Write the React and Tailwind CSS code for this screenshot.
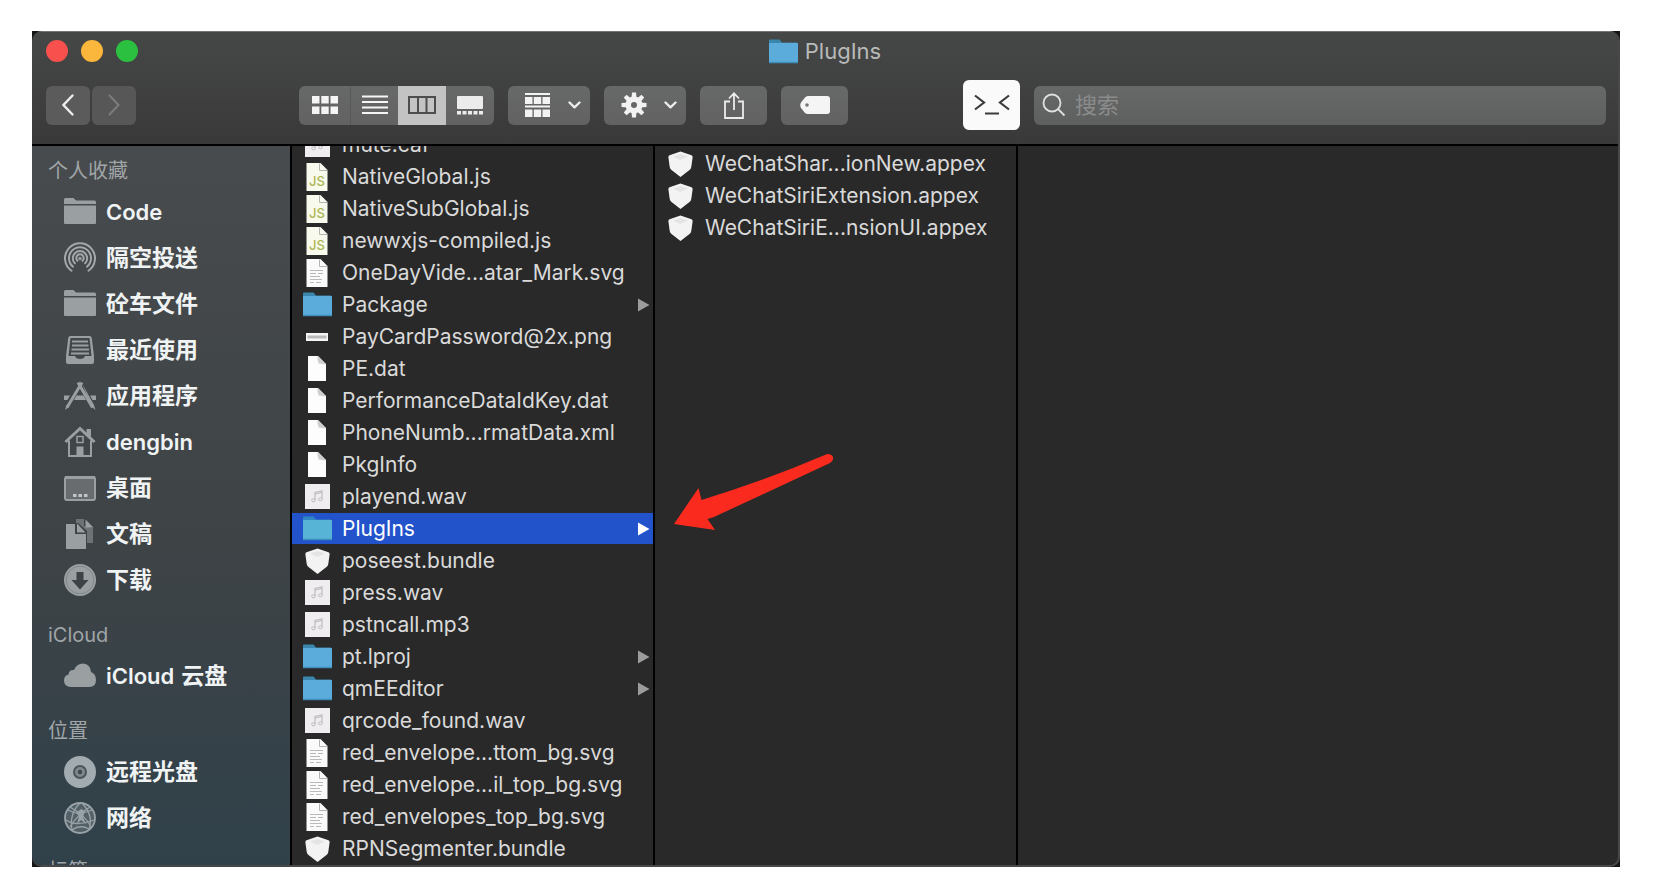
import React from "react";

const FONT = "font-['Inter','Noto_Sans_CJK_SC',sans-serif]";

/* ---------- file icons ---------- */

function BlueFolder({ selected }) {
  const front = selected ? "#58b4d6" : "#5cacdb";
  return (
    <svg viewBox="0 0 29 25" className="h-[25px] w-[29px]" aria-hidden="true">
      <path d="M0 1.5Q0 .5 1 .5H10.500L13 3.500H28V8H0Z" fill={selected ? "#3187c4" : "#3b86ad"} />
      <rect x="0" y="4" width="29" height="20" rx="0.500" fill={front} />
      <path d="M0 23.500H29" stroke="#3f8fbd" strokeWidth="1.500" />
    </svg>
  );
}

function Page({ fill = "#fafafa", children }) {
  return (
    <svg viewBox="0 0 22 28" className="h-7 w-[22px]" aria-hidden="true">
      <path d="M.5 0H14.500L21.500 7V28H.5Z" fill={fill} />
      <path d="M13.500 .5V7.500H21" fill="none" stroke="#b5b5b5" strokeWidth="1" />
      {children}
    </svg>
  );
}

function JsIcon() {
  return (
    <Page fill="#f9faee">
      <text x="11" y="23" textAnchor="middle" fontFamily="Inter" fontSize="13" fontWeight="500" fill="#adb552">
        JS
      </text>
    </Page>
  );
}

function SvgIcon() {
  return (
    <Page>
      <path d="M4 11.500H17M4 14.500H10M12 14.500H17M4 17.500H14M4 20.500H16M4 23.500H8M10 23.500H15" stroke="#b9b9b9" strokeWidth="1" />
    </Page>
  );
}

function BlankIcon() {
  return (
    <svg viewBox="0 0 18 25" className="h-[25px] w-[18px]" aria-hidden="true">
      <path d="M0 0H10L18 8V25H0Z" fill="#fdfdfd" />
      <path d="M9 0.500L10.500 7.500L18 8.500L10 0Z" fill="#cfcfcf" />
    </svg>
  );
}

function AudioIcon() {
  return (
    <svg viewBox="0 0 25 25" className="size-[25px]" aria-hidden="true">
      <rect width="25" height="25" fill="#efedef" />
      <path d="M10 16V8.500L17 7V15M10 10L17 8.500" fill="none" stroke="#bdbbbf" strokeWidth="1.200" />
      <ellipse cx="8.500" cy="16.300" rx="1.800" ry="1.500" fill="none" stroke="#bdbbbf" />
      <ellipse cx="15.500" cy="15.300" rx="1.800" ry="1.500" fill="none" stroke="#bdbbbf" />
    </svg>
  );
}

function PngIcon() {
  return (
    <svg viewBox="0 0 22 8" className="h-2 w-[22px]" aria-hidden="true">
      <rect width="22" height="8" fill="#f4f4f4" />
      <rect x="1.500" y="2.500" width="19" height="3" fill="#b9b9b9" />
    </svg>
  );
}

function BundleIcon() {
  return (
    <svg viewBox="0 0 25 26" className="h-[26px] w-[25px]" aria-hidden="true">
      <path d="M12.500 .5L23.500 4.200Q24.800 4.800 24.600 6.500L23.300 16Q23 18 21.500 19L12.500 26L3.500 19Q2 18 1.700 16L.4 6.500Q.2 4.800 1.500 4.200Z" fill="#f3f3f3" />
      <path d="M5 5.500L12.500 3L20 5.500L12.500 9Z" fill="#e4e4e4" />
    </svg>
  );
}

const FILE_ICONS = {
  folder: BlueFolder,
  js: JsIcon,
  svg: SvgIcon,
  blank: BlankIcon,
  audio: AudioIcon,
  png: PngIcon,
  bundle: BundleIcon,
};

/* ---------- sidebar icons ---------- */

function SideSvg({ children }) {
  return (
    <svg viewBox="0 0 32 32" className="size-8 shrink-0" fill="#9a9fa2" stroke="none" aria-hidden="true">
      {children}
    </svg>
  );
}

const SIDE_ICONS = {
  folder: (
    <SideSvg>
      <path d="M0 3.500Q0 2 1.500 2H9.500L12 4.500H30.500Q32 4.500 32 6V8H0Z" />
      <path d="M0 9.500H32V27Q32 28 31 28H1Q0 28 0 27Z" />
    </SideSvg>
  ),
  airdrop: (
    <SideSvg>
      <g fill="none" stroke="#a3a7aa" strokeWidth="2" strokeLinecap="round">
        <path d="M7.500 28.700A15 15 0 1 1 24.500 28.700" />
        <path d="M9 24.700A11 11 0 1 1 23 24.700" />
        <path d="M10.800 21.300A7.200 7.200 0 1 1 21.200 21.300" />
        <path d="M13.500 18.800A3.700 3.700 0 1 1 18.500 18.800" />
      </g>
      <circle cx="16" cy="16.500" r="1.700" />
    </SideSvg>
  ),
  recents: (
    <SideSvg>
      <path fillRule="evenodd" d="M6.500 2H25.500Q27.500 2 27.800 4L30 22V28Q30 30 28 30H4Q2 30 2 28V22L4.200 4Q4.500 2 6.500 2ZM6.500 4L4.500 22H11Q12 25 16 25T21 22H27.500L25.500 4Z" />
      <path d="M8 7.500H24M8 11.500H24.500M7.500 15.500H25M7 19.500H25" stroke="#9a9fa2" strokeWidth="1.800" />
    </SideSvg>
  ),
  apps: (
    <SideSvg>
      <path d="M14 2.500L28.500 27.500M18 2.500L3 27.500" stroke="#9a9fa2" strokeWidth="3" />
      <path d="M18 3.500L30 25L31.500 30L28 27" />
      <path d="M0 15.500H6L3.500 20H0ZM12.500 15.500H19.500L22 20H10ZM26 15.500H32V20H28.500Z" />
      <path d="M1 30L5 27L2.500 25Z" />
    </SideSvg>
  ),
  home: (
    <SideSvg>
      <path d="M1.500 16L16 2.500L30.500 16" fill="none" stroke="#9a9fa2" strokeWidth="3" />
      <path d="M22.500 3H27V13L22.500 8.500Z" />
      <path d="M5 14.500V30H27V14.500" fill="none" stroke="#9a9fa2" strokeWidth="2" />
      <rect x="13" y="10.500" width="6" height="6" fill="none" stroke="#9a9fa2" strokeWidth="1.500" />
      <rect x="12.500" y="20.500" width="7" height="10" />
    </SideSvg>
  ),
  desktop: (
    <SideSvg>
      <rect x="1" y="5" width="30" height="23" rx="2" fill="#686c6f" stroke="#9a9fa2" strokeWidth="2" />
      <path d="M1 5.500H31" stroke="#9a9fa2" strokeWidth="3" />
      <path d="M9 22H12.500V25H9ZM14.500 22H18V25H14.500ZM20 22H23.500V25H20Z" fill="#c0c4c6" />
    </SideSvg>
  ),
  documents: (
    <SideSvg>
      <path d="M12 1H20V8L29 10V25H23V13L14 5H12Z" fill="#6d7275" />
      <path d="M21.500 1.500V9.500H29.500Z" />
      <path d="M2 6H11V16H22V31H2Z" />
      <path d="M13 5.500V14.500H21.500Z" />
    </SideSvg>
  ),
  downloads: (
    <SideSvg>
      <circle cx="16" cy="16" r="16" />
      <circle cx="16" cy="16" r="13.800" fill="none" stroke="#82878a" strokeWidth="1" />
      <path d="M12.500 8H19.500V16H24.500L16 25.500L7.500 16H12.500Z" fill="#3d4347" />
    </SideSvg>
  ),
  cloud: (
    <SideSvg>
      <path d="M7 27Q0 27 0 20.500Q0 15.500 4.500 14.500Q5 9.500 10 10Q12.500 3.500 19 3.500Q26.500 4 27 12Q32 14 32 20Q32 27 25.500 27Z" />
    </SideSvg>
  ),
  disc: (
    <SideSvg>
      <circle cx="16" cy="16" r="16" fill="#a2abaf" />
      <circle cx="16" cy="16" r="6" fill="#7d878c" stroke="#4b565b" strokeWidth="2" />
      <circle cx="16" cy="16" r="2.200" fill="#3c484e" />
    </SideSvg>
  ),
  network: (
    <SideSvg>
      <circle cx="16" cy="16" r="15" fill="#536067" stroke="#98a2a7" strokeWidth="1.800" />
      <g fill="none" stroke="#98a2a7" strokeWidth="1.300">
        <path d="M4 8Q14 14 28 8M2 18Q12 25 30 18M8 28Q16 22 25 27M16 1Q5 12 8 28M18 1Q30 14 25 27M6 5Q22 14 27 25M26 5Q14 12 6 25" />
      </g>
      <path d="M17 7L21 9L19 15L22 22L17 18L13 22L15 14L12 11Z" fill="#98a2a7" />
    </SideSvg>
  ),
};

/* ---------- data ---------- */

const SECTIONS = [
  {
    title: "个人收藏",
    spacing: "pt-[7px]",
    items: [
      ["Code", "folder"],
      ["隔空投送", "airdrop"],
      ["砼车文件", "folder"],
      ["最近使用", "recents"],
      ["应用程序", "apps"],
      ["dengbin", "home"],
      ["桌面", "desktop"],
      ["文稿", "documents"],
      ["下载", "downloads"],
    ],
  },
  { title: "iCloud", spacing: "pt-[14px]", items: [["iCloud 云盘", "cloud"]] },
  {
    title: "位置",
    spacing: "pt-[14px]",
    items: [
      ["远程光盘", "disc"],
      ["网络", "network"],
    ],
  },
  { title: "标签", spacing: "pt-3", items: [] },
];

const FILES = [
  ["mute.caf", "audio"],
  ["NativeGlobal.js", "js"],
  ["NativeSubGlobal.js", "js"],
  ["newwxjs-compiled.js", "js"],
  ["OneDayVide...atar_Mark.svg", "svg"],
  ["Package", "folder"],
  ["PayCardPassword@2x.png", "png"],
  ["PE.dat", "blank"],
  ["PerformanceDataIdKey.dat", "blank"],
  ["PhoneNumb...rmatData.xml", "blank"],
  ["PkgInfo", "blank"],
  ["playend.wav", "audio"],
  ["PlugIns", "folder"],
  ["poseest.bundle", "bundle"],
  ["press.wav", "audio"],
  ["pstncall.mp3", "audio"],
  ["pt.lproj", "folder"],
  ["qmEEditor", "folder"],
  ["qrcode_found.wav", "audio"],
  ["red_envelope...ttom_bg.svg", "svg"],
  ["red_envelope...il_top_bg.svg", "svg"],
  ["red_envelopes_top_bg.svg", "svg"],
  ["RPNSegmenter.bundle", "bundle"],
];

const PLUGINS = [
  ["WeChatShar...ionNew.appex", "bundle"],
  ["WeChatSiriExtension.appex", "bundle"],
  ["WeChatSiriE...nsionUI.appex", "bundle"],
];

/* ---------- parts ---------- */

function FileRow({ name, kind, selected }) {
  const Icon = FILE_ICONS[kind];
  return (
    <li className="h-8">
      <button
        type="button"
        className={
          selected
            ? "flex h-[31px] w-full items-center bg-[#2353cb] pr-[3px] pl-[10px] text-left text-white"
            : "flex h-[31px] w-full items-center pr-[3px] pl-[10px] text-left text-[#dadada]"
        }
      >
        <span className="flex w-[30px] shrink-0 justify-center">
          <Icon selected={selected} />
        </span>
        <span className="ml-[10px] flex-1 text-[21px] leading-[30px] whitespace-nowrap">{name}</span>
        {kind === "folder" && (
          <svg viewBox="0 0 12 14" className="h-[14px] w-3 shrink-0" fill={selected ? "#fff" : "#9c9c9c"} aria-hidden="true">
            <path d="M0 0.500L11.500 7L0 13.500Z" />
          </svg>
        )}
      </button>
    </li>
  );
}

function Chevron() {
  return (
    <svg viewBox="0 0 13 8" className="h-2 w-[13px]" fill="none" stroke="#ececec" strokeWidth="2.400" strokeLinecap="round" strokeLinejoin="round" aria-hidden="true">
      <path d="M1.500 1.500L6.500 6.300L11.500 1.500" />
    </svg>
  );
}

function Gear() {
  return (
    <svg viewBox="-13 -13 26 26" className="size-[26px]" aria-hidden="true">
      <g fill="#f2f2f2">
        {[0, 45, 90, 135].map((a) => (
          <path key={a} d="M-2.600 -6L-2 -12.500H2L2.600 -6V6L2 12.500H-2L-2.600 6Z" transform={`rotate(${a})`} />
        ))}
        <circle r="8.500" />
      </g>
      <circle r="3" fill="#666" />
    </svg>
  );
}

const TOOL = "flex h-[39px] items-center rounded-md bg-linear-to-b from-[#676868] to-[#626262]";

function Toolbar() {
  return (
    <div className="mt-[10px] flex h-[50px] items-center pr-3 pl-[14px]">
      <div className="flex gap-[2px]">
        <button type="button" aria-label="后退" className="flex h-[39px] w-11 items-center justify-center rounded-md bg-[#5b5b5c]">
          <svg viewBox="0 0 12 22" className="h-[22px] w-3" fill="none" stroke="#ececec" strokeWidth="2.400" strokeLinecap="round">
            <path d="M10.500 1.500L1.500 11L10.500 20.500" />
          </svg>
        </button>
        <button type="button" aria-label="前进" className="flex h-[39px] w-11 items-center justify-center rounded-md bg-[#575758]">
          <svg viewBox="0 0 12 22" className="h-[22px] w-3" fill="none" stroke="#7c7c7c" strokeWidth="2" strokeLinecap="round">
            <path d="M1.500 1.500L10.500 11L1.500 20.500" />
          </svg>
        </button>
      </div>

      <div className="ml-[163px] flex gap-[14px]">
        <div className="flex h-[39px] overflow-hidden rounded-md bg-linear-to-b from-[#676868] to-[#626262]">
          <button type="button" aria-label="图标" className="flex w-[52px] items-center justify-center border-r border-[#575757]">
            <svg viewBox="0 0 26 18" className="h-[18px] w-[26px]" fill="#f5f5f5">
              <path d="M0 0H7.500V7.500H0ZM9.300 0H16.700V7.500H9.300ZM18.500 0H26V7.500H18.500ZM0 10.500H7.500V18H0ZM9.300 10.500H16.700V18H9.300ZM18.500 10.500H26V18H18.500Z" />
            </svg>
          </button>
          <button type="button" aria-label="列表" className="flex w-[47px] items-center justify-center">
            <svg viewBox="0 0 26 20" className="h-5 w-[26px]" stroke="#f5f5f5" strokeWidth="1.800">
              <path d="M0 1.500H26M0 7H26M0 12.500H26M0 18H26" />
            </svg>
          </button>
          <button type="button" aria-label="分栏" className="flex w-12 items-center justify-center bg-[#c3c3c3]">
            <svg viewBox="0 0 28 18" className="h-[18px] w-7" fill="none" stroke="#4d4d4d" strokeWidth="2">
              <rect x="1" y="1" width="26" height="16" />
              <path d="M10 1V17M18.500 1V17" />
            </svg>
          </button>
          <button type="button" aria-label="画廊" className="flex w-12 items-center justify-center">
            <svg viewBox="0 0 26 19" className="h-[19px] w-[26px]" fill="#ececec">
              <rect width="26" height="13" rx="1" />
              <path d="M0 15H4V18.500H0ZM5.500 15H9.500V18.500H5.500ZM11 15H15V18.500H11ZM16.500 15H20.500V18.500H16.500ZM22 15H26V18.500H22Z" />
            </svg>
          </button>
        </div>

        <button type="button" aria-label="分组" className={TOOL + " w-[82px] justify-between pr-[9px] pl-[17px]"}>
          <svg viewBox="0 0 25 25" className="size-[25px]" fill="#f3f3f3" aria-hidden="true">
            <path d="M0 0H25V2H0ZM0 12.500H25V14.500H0ZM0 4H7.500V11H0ZM8.800 4H16.200V11H8.800ZM17.500 4H25V11H17.500ZM0 16.500H7.500V24H0ZM8.800 16.500H16.200V24H8.800ZM17.500 16.500H25V24H17.500Z" />
          </svg>
          <Chevron />
        </button>
        <button type="button" aria-label="操作" className={TOOL + " w-[82px] justify-between pr-[9px] pl-[17px]"}>
          <Gear />
          <Chevron />
        </button>
        <button type="button" aria-label="共享" className={TOOL + " w-[67px] justify-center"}>
          <svg viewBox="0 0 20 27" className="h-[27px] w-5" fill="none" stroke="#ececec" strokeWidth="1.800" aria-hidden="true">
            <path d="M6 9.500H1V26H19V9.500H14M10 18V1.500M5 6.500L10 1.300L15 6.500" />
          </svg>
        </button>
        <button type="button" aria-label="标记" className={TOOL + " w-[67px] justify-center"}>
          <svg viewBox="0 0 30 18" className="h-[18px] w-[30px]" aria-hidden="true">
            <path d="M8 0H27Q30 0 30 3V15Q30 18 27 18H8Q6 18 5 17L1 12Q-.5 9 1 6.500L5 1.500Q6 0 8 0Z" fill="#f5f5f5" />
            <circle cx="7" cy="9" r="1.800" fill="#777" />
          </svg>
        </button>
      </div>

      <button type="button" aria-label="终端" className="ml-[115px] flex h-[50px] w-[57px] shrink-0 items-center justify-center rounded-md bg-[#fafafa]">
        <svg viewBox="0 0 36 22" className="h-[22px] w-9" fill="none" stroke="#3c3c3c" strokeWidth="2.200" aria-hidden="true">
          <path d="M1 1.500L10 8.500L1 15.500M35 1.500L26 8.500L35 15.500M11 19.500H25" />
        </svg>
      </button>

      <label className="ml-[14px] flex h-[39px] min-w-0 flex-1 items-center rounded-md bg-linear-to-b from-[#676968] to-[#5e5f5f] pl-2">
        <svg viewBox="0 0 24 24" className="size-6 shrink-0" fill="none" stroke="#dedede" strokeWidth="1.800" aria-hidden="true">
          <circle cx="10" cy="10" r="8.500" />
          <path d="M16 16L22.500 22.500" />
        </svg>
        <input
          type="search"
          aria-label="搜索"
          placeholder="搜索"
          className="ml-[9px] min-w-0 flex-1 bg-transparent text-[22px] leading-[32px] text-white outline-none placeholder:text-[#8b8c8c]"
        />
      </label>
    </div>
  );
}

/* Chinese words are set heavier and one size up, so both scripts look equally strong. */
function SideLabel({ text }) {
  return (
    <span className="flex gap-[7px] whitespace-nowrap">
      {text.split(" ").map((word) => (
        <span key={word} className={/[a-z]/i.test(word) ? "text-[22px] font-semibold" : "text-[23px] font-bold"}>
          {word}
        </span>
      ))}
    </span>
  );
}

function Sidebar() {
  return (
    <nav className="w-[260px] shrink-0 overflow-hidden border-r-2 border-black bg-linear-to-b from-[#474b4d] via-[#3e4346] via-55% to-[#30414a]">
      {SECTIONS.map((section) => (
        <section key={section.title} className={section.spacing}>
          <h2 className="pl-4 text-[20px] leading-[36px] text-[#a0a5a8]">{section.title}</h2>
          <ul>
            {section.items.map(([name, icon]) => (
              <li key={name}>
                <a href="#" className="flex h-[46px] items-center gap-[10px] pl-8 leading-[32px] text-[#f0f3f4]">
                  {SIDE_ICONS[icon]}
                  <SideLabel text={name} />
                </a>
              </li>
            ))}
          </ul>
        </section>
      ))}
    </nav>
  );
}

export default function App() {
  return (
    <main className={"flex h-screen flex-col bg-white pt-[31px] pr-[42px] pb-[9px] pl-8 " + FONT}>
      <div className="flex min-h-0 flex-1 flex-col bg-[#151515]">
        <div className="relative flex min-h-0 flex-1 flex-col overflow-hidden rounded-[10px] border-r-2 border-b-2 border-[#484848] bg-[#292929]">
          <header className="border-b-2 border-black bg-linear-to-b from-[#464847] to-[#393939] pb-[14px]">
            <div className="grid h-[39px] grid-cols-[1fr_auto_1fr] items-center border-t border-[#737474] px-[14px]">
              <div className="flex gap-[13px]">
                <button type="button" aria-label="关闭" className="size-[22px] rounded-full bg-[#f8504c]" />
                <button type="button" aria-label="最小化" className="size-[22px] rounded-full bg-[#fbb63c]" />
                <button type="button" aria-label="缩放" className="size-[22px] rounded-full bg-[#2bc03f]" />
              </div>
              <h1 className="flex items-center gap-[7px] text-[22px] leading-[30px] text-[#b9baba]">
                <BlueFolder />
                PlugIns
              </h1>
            </div>
            <Toolbar />
          </header>

          <div className="flex min-h-0 flex-1">
            <Sidebar />
            <div className="w-[363px] shrink-0 overflow-hidden border-r-2 border-black">
              <ul className="-mt-[17px]">
                {FILES.map(([name, kind]) => (
                  <FileRow key={name} name={name} kind={kind} selected={name === "PlugIns"} />
                ))}
              </ul>
            </div>
            <div className="w-[363px] shrink-0 overflow-hidden border-r-2 border-black pt-0.5">
              <ul>
                {PLUGINS.map(([name, kind]) => (
                  <FileRow key={name} name={name} kind={kind} />
                ))}
              </ul>
            </div>
            <div className="min-w-0 flex-1" />
          </div>

          <svg viewBox="0 0 160 78" className="absolute top-[422px] left-[642px] h-[78px] w-40" fill="#fb2a1e" aria-hidden="true">
            <path d="M0 71L24.500 35L27.500 47Q90 28 152 1.500Q157 0 159 4Q160 7 156 10L40 64L33.500 66L41 77Z" />
          </svg>
        </div>
      </div>
    </main>
  );
}
